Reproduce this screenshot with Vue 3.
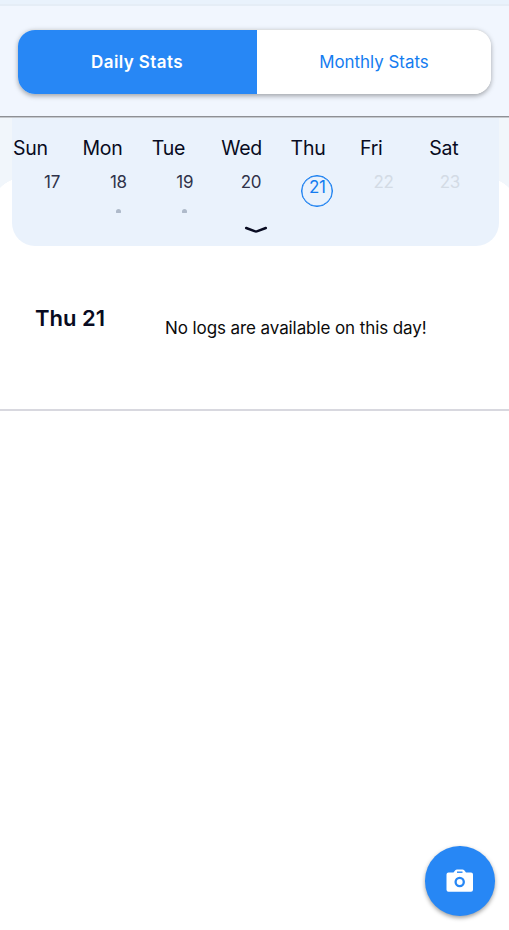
<script setup>
import { ref } from 'vue'

const tabs = ['Daily Stats', 'Monthly Stats']
const activeTab = ref(0)
const weekdays = ['Sun', 'Mon', 'Tue', 'Wed', 'Thu', 'Fri', 'Sat']
const days = [
  { date: 17 },
  { date: 18, dot: true },
  { date: 19, dot: true },
  { date: 20 },
  { date: 21, selected: true },
  { date: 22, disabled: true },
  { date: 23, disabled: true },
]
</script>

<template>
  <main class="screen">
    <div class="strip"></div>
    <header class="header">
      <div class="tabs">
        <button
          v-for="(tab, i) in tabs"
          :key="tab"
          class="tab"
          :class="{ active: i === activeTab }"
          @click="activeTab = i"
        >{{ tab }}</button>
      </div>
    </header>

    <section class="calendar-area">
      <div class="calendar">
        <div class="weekdays">
          <span v-for="name in weekdays" :key="name">{{ name }}</span>
        </div>
        <div class="dates">
          <div
            v-for="day in days"
            :key="day.date"
            class="day"
            :class="{ selected: day.selected, disabled: day.disabled }"
          >
            <span class="number">{{ day.date }}</span>
            <i v-if="day.dot" class="dot"></i>
          </div>
        </div>
        <svg class="expand" width="24" height="10" viewBox="0 0 24 10">
          <path d="M2.200 3 L10.500 6.100 Q12 6.700 13.500 6.100 L21.800 3" fill="none" stroke="#080b21" stroke-width="2.500" stroke-linecap="round" />
        </svg>
      </div>
    </section>

    <section class="log">
      <h2>Thu 21</h2>
      <p>No logs are available on this day!</p>
    </section>

    <button class="fab" aria-label="Camera">
      <svg width="28" height="24" viewBox="0 0 28 24">
        <path fill="#fff" fill-rule="evenodd" d="M2.500 3.500H7.500L9.300 1.300Q9.900.500 11 .500H16.500Q17.600.500 18.200 1.300L20 3.500H25Q27 3.500 27 5.500V20.800Q27 22.800 25 22.800H2.500Q.500 22.800.500 20.800V5.500Q.500 3.500 2.500 3.500Z" />
        <path d="M11 3.200H16.500" stroke="#2787f5" stroke-width="1.400" />
        <circle cx="13.700" cy="13" r="4.100" fill="none" stroke="#2787f5" stroke-width="2.300" />
      </svg>
    </button>
  </main>
</template>

<style>
body {
  margin: 0;
  background: #fff;
}
</style>

<style scoped>
* {
  box-sizing: border-box;
}
.screen {
  position: relative;
  width: 100%;
  height: 930px;
  overflow: hidden;
  background: #fff;
  color: #080b21;
  font-family: Inter, "Liberation Sans", sans-serif;
}
button {
  border: 0;
  padding: 0;
  font-family: inherit;
}
.strip {
  height: 6px;
  background: #e9f2fc;
  border-bottom: 2px solid #e5edf6;
}
.header {
  height: 112px;
  padding: 23px 18px 0;
  background: linear-gradient(#8e9095, #8e9095) 0 110px / 100% 1px no-repeat,
    linear-gradient(#c5c8cd, #c5c8cd) 0 111px / 100% 1px no-repeat,
    #f1f6fe;
}
.tabs {
  display: grid;
  grid-template-columns: 239px 1fr;
  height: 65px;
  border: 1px solid #dfe1e3;
  border-width: 1px 0 0;
  border-radius: 17px;
  overflow: hidden;
  background: #fff;
  box-shadow: 0 2px 5px rgba(0, 0, 0, 0.34);
}
.tab {
  background: #fff;
  color: #147cf0;
  font-size: 16.900px;
}
.tab.active {
  padding-right: 1px;
  background: #2787f5;
  color: #fff;
  font-weight: 600;
  font-size: 17px;
  letter-spacing: 0.400px;
}
.calendar-area {
  height: 128px;
  padding: 0 10px 0 12px;
  background: radial-gradient(circle at 24px 93px, #fff 33px, transparent 33.500px) 0 0 / 24px 100% no-repeat,
    radial-gradient(circle at 0 93px, #fff 33px, transparent 33.500px) 100% 0 / 24px 100% no-repeat,
    linear-gradient(#f1f6fb 84px, #fff 84px);
}
.calendar {
  display: flex;
  flex-direction: column;
  height: 100%;
  background: #eaf2fc;
  border-radius: 0 0 23px 23px;
}
.weekdays {
  display: grid;
  grid-template-columns: repeat(7, 69.400px);
  height: 57px;
  padding: 18px 0 0 1px;
  font-size: 19.500px;
  line-height: 24px;
  letter-spacing: -0.250px;
}
.dates {
  display: grid;
  grid-template-columns: repeat(7, 66.300px);
  height: 50px;
  padding-left: 7px;
  font-size: 17px;
  line-height: 14px;
  letter-spacing: -0.200px;
  color: #30334a;
}
.day {
  display: flex;
  flex-direction: column;
  align-items: center;
}
.number {
  width: 32px;
  height: 32px;
  text-align: center;
}
.selected .number {
  border: 1.500px solid #147cf0;
  border-radius: 50%;
  color: #147cf0;
  line-height: 23px;
  box-shadow: inset 0 0 0 0.400px #147cf0;
}
.disabled {
  color: #d3dbe5;
}
.dot {
  width: 5px;
  height: 4px;
  margin-top: 2px;
  border-radius: 3px 3px 1px 1px;
  background: #afbaca;
}
.expand {
  align-self: center;
}
.log {
  display: flex;
  height: 165px;
  padding-left: 35px;
  border-bottom: 2px solid #d8d8df;
}
h2 {
  width: 130px;
  margin: 59px 0 0;
  font-size: 22px;
  line-height: 26px;
  font-weight: 600;
}
p {
  margin: 70px 0 0;
  color: #0b0b0b;
  font-size: 17px;
  line-height: 24px;
  letter-spacing: -0.090px;
}
.fab {
  position: absolute;
  right: 14.500px;
  bottom: 14.500px;
  display: grid;
  place-items: center;
  width: 69.500px;
  height: 69.500px;
  border-radius: 50%;
  background: #2787f5;
  box-shadow: 0 2px 4px rgba(0, 0, 0, 0.38);
}
</style>
